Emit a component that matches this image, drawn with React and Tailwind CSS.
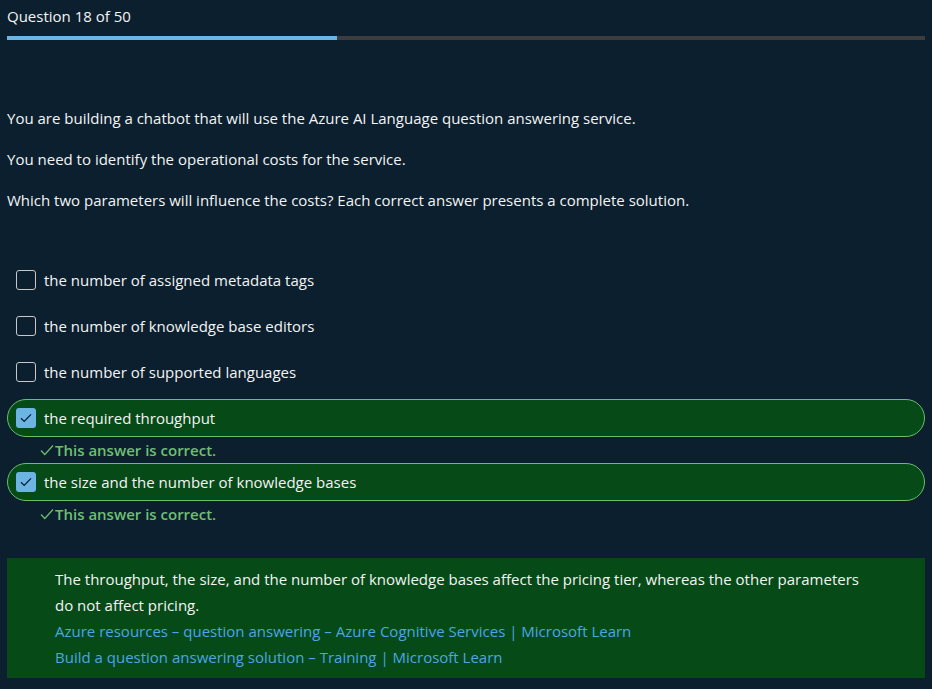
import React from 'react';

const options = [
  { text: 'the number of assigned metadata tags', checked: false },
  { text: 'the number of knowledge base editors', checked: false },
  { text: 'the number of supported languages', checked: false },
  { text: 'the required throughput', checked: true },
  { text: 'the size and the number of knowledge bases', checked: true },
];

function Box({ checked }) {
  if (!checked) {
    return <span className="w-5 h-5 shrink-0 rounded-[3px] border border-[#c8c8c8]" />;
  }
  return (
    <span className="w-5 h-5 shrink-0 rounded-[3px] bg-[#6cb4e4] flex items-center justify-center">
      <svg width="12" height="10" viewBox="0 0 12 10" fill="none">
        <path d="M1 5.2 L4.2 8.4 L11 1.4" stroke="#0b1f2e" strokeWidth="1.3" />
      </svg>
    </span>
  );
}

export default function App() {
  return (
    <div
      className="min-h-screen bg-[#0b1f2e] text-[#f4f4f4] px-[7px] pt-[6px] text-[15px]"
      style={{ fontFamily: '"Open Sans", "Noto Sans", sans-serif' }}
    >
      <div className="leading-5">Question 18 of 50</div>
      <div className="mt-[10px] h-1 bg-[#3c3c3c] w-[918px]">
        <div className="h-1 bg-[#6cb4e4] w-[36%]" />
      </div>

      {/* question */}
      <div className="mt-[68px] flex flex-col gap-[21px] leading-5">
        <p>You are building a chatbot that will use the Azure AI Language question answering service.</p>
        <p>You need to identify the operational costs for the service.</p>
        <p>Which two parameters will influence the costs? Each correct answer presents a complete solution.</p>
      </div>

      {/* options */}
      <div className="mt-[47px] flex flex-col w-[918px]">
        {options.map((o, i) =>
          o.checked ? (
            <div key={i} className={i === 3 ? 'mt-[4px]' : ''}>
              <div className="h-[38px] rounded-full border border-[#6abf69] bg-[#064a17] flex items-center gap-2 pl-2">
                <Box checked />
                <span>{o.text}</span>
              </div>
              <div className="pl-[33px] h-[26px] flex items-center text-[#6fbf72] font-semibold">
                <svg width="14" height="12" viewBox="0 0 14 12" fill="none" className="mr-[1px]">
                  <path d="M1 6.5 L4.8 10.5 L13 1.5" stroke="#6fbf72" strokeWidth="1.2" />
                </svg>
                This answer is correct.
              </div>
            </div>
          ) : (
            <div key={i} className="h-[46px] flex items-center gap-2 pl-[9px]">
              <Box />
              <span>{o.text}</span>
            </div>
          )
        )}
      </div>

      {/* explanation */}
      <div className="mt-[31px] w-[918px] bg-[#064a17] pl-12 pr-[55px] py-[8px] leading-[26px]">
        <p>
          The throughput, the size, and the number of knowledge bases affect the pricing tier, whereas the other parameters do not affect pricing.
        </p>
        <a className="block text-[#4aa6e6]">Azure resources – question answering – Azure Cognitive Services | Microsoft Learn</a>
        <a className="block text-[#4aa6e6]">Build a question answering solution – Training | Microsoft Learn</a>
      </div>
    </div>
  );
}
